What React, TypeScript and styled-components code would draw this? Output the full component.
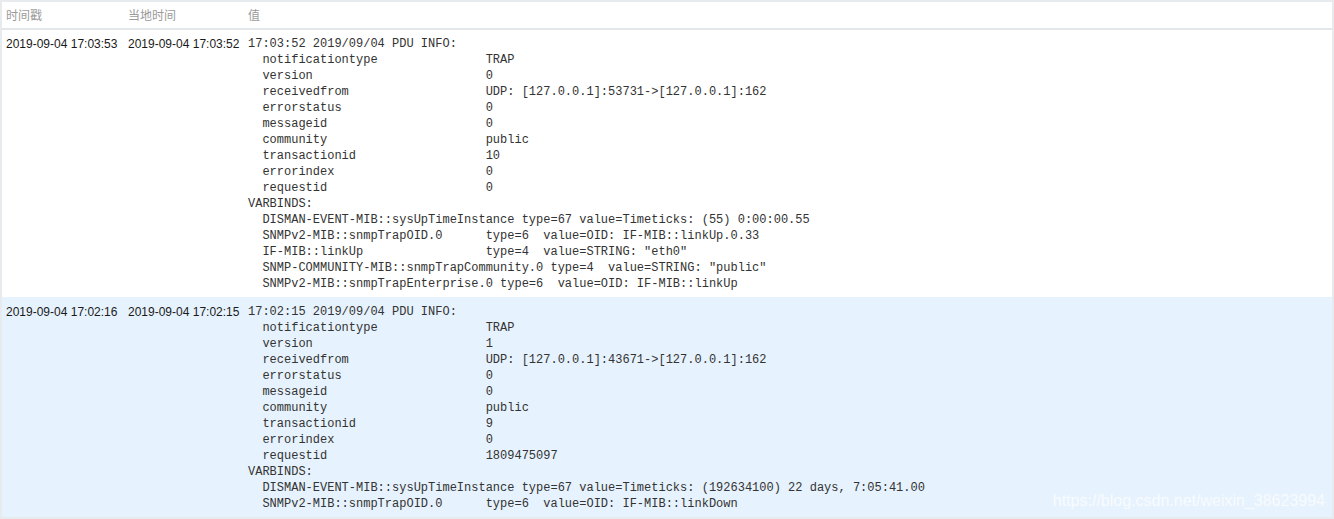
import React from "react";
import styled, { createGlobalStyle } from "styled-components";

const Global = createGlobalStyle`
  html, body { margin: 0; padding: 0; background: #e8ebee; }
  body { font-family: "Liberation Sans", Arial, sans-serif; overflow: hidden; }
`;

const Frame = styled.div`
  position: relative;
  margin: 2px 2px 0 2px;
  width: 1330px;
  height: 515px;
  overflow: hidden;
  background: #e8ebee;
`;

const Grid = styled.div`
  display: grid;
  grid-template-columns: 122px 120px 1fr;
`;

const Header = styled(Grid)`
  height: 26px;
  background: #fff;
  border-bottom: 2px solid #e4e7ea;
  align-items: center;
`;

const HeadCell = styled.div`
  padding-left: 4px;
  font-family: "Noto Sans CJK SC", "Microsoft YaHei", sans-serif;
  font-size: 12px;
  color: #9a9a9a;
  line-height: 16px;
`;

const Row = styled(Grid)<{ $alt?: boolean }>`
  background: ${(p) => (p.$alt ? "#e6f2fd" : "#ffffff")};
  padding: ${(p) => (p.$alt ? "7px 0 5px" : "6px 0 5px")};
  align-items: start;
`;

const DateCell = styled.div`
  padding-left: 4px;
  font-family: "Liberation Sans", Arial, sans-serif;
  font-size: 12px;
  line-height: 16px;
  color: #1a1a1a;
  white-space: nowrap;
`;

const Value = styled.pre`
  margin: 0;
  padding-left: 4px;
  font-family: "Liberation Mono", "Courier New", monospace;
  font-size: 12px;
  line-height: 16px;
  color: #333;
`;

const Watermark = styled.div`
  position: absolute;
  right: 7px;
  top: 489px;
  font-family: "Liberation Sans", Arial, sans-serif;
  font-size: 16px;
  line-height: 20px;
  color: rgba(255, 255, 255, 0.75);
  pointer-events: none;
`;

const pad = (s: string, n: number) => s + " ".repeat(Math.max(1, n - s.length));

const fields = (vals: string[]) => {
  const keys = [
    "notificationtype",
    "version",
    "receivedfrom",
    "errorstatus",
    "messageid",
    "community",
    "transactionid",
    "errorindex",
    "requestid",
  ];
  return keys.map((k, i) => pad("  " + k, 33) + vals[i]);
};

const vb = (name: string, type: string, value: string, width: number) =>
  "  " + pad(name, width) + pad("type=" + type, 8) + "value=" + value;

const row1 = [
  "17:03:52 2019/09/04 PDU INFO:",
  ...fields(["TRAP", "0", "UDP: [127.0.0.1]:53731->[127.0.0.1]:162", "0", "0", "public", "10", "0", "0"]),
  "VARBINDS:",
  vb("DISMAN-EVENT-MIB::sysUpTimeInstance", "67", "Timeticks: (55) 0:00:00.55", 36),
  vb("SNMPv2-MIB::snmpTrapOID.0", "6", "OID: IF-MIB::linkUp.0.33", 31),
  vb("IF-MIB::linkUp", "4", 'STRING: "eth0"', 31),
  vb("SNMP-COMMUNITY-MIB::snmpTrapCommunity.0", "4", 'STRING: "public"', 40),
  vb("SNMPv2-MIB::snmpTrapEnterprise.0", "6", "OID: IF-MIB::linkUp", 33),
].join("\n");

const row2 = [
  "17:02:15 2019/09/04 PDU INFO:",
  ...fields(["TRAP", "1", "UDP: [127.0.0.1]:43671->[127.0.0.1]:162", "0", "0", "public", "9", "0", "1809475097"]),
  "VARBINDS:",
  vb("DISMAN-EVENT-MIB::sysUpTimeInstance", "67", "Timeticks: (192634100) 22 days, 7:05:41.00", 36),
  vb("SNMPv2-MIB::snmpTrapOID.0", "6", "OID: IF-MIB::linkDown", 31),
].join("\n");

export default function App() {
  return (
    <>
      <Global />
      <Frame>
        <Header>
          <HeadCell>时间戳</HeadCell>
          <HeadCell>当地时间</HeadCell>
          <HeadCell>值</HeadCell>
        </Header>
        <Row>
          <DateCell>2019-09-04 17:03:53</DateCell>
          <DateCell>2019-09-04 17:03:52</DateCell>
          <Value>{row1}</Value>
        </Row>
        <Row $alt>
          <DateCell>2019-09-04 17:02:16</DateCell>
          <DateCell>2019-09-04 17:02:15</DateCell>
          <Value>{row2}</Value>
        </Row>
        <Watermark>https://blog.csdn.net/weixin_38623994</Watermark>
      </Frame>
    </>
  );
}
